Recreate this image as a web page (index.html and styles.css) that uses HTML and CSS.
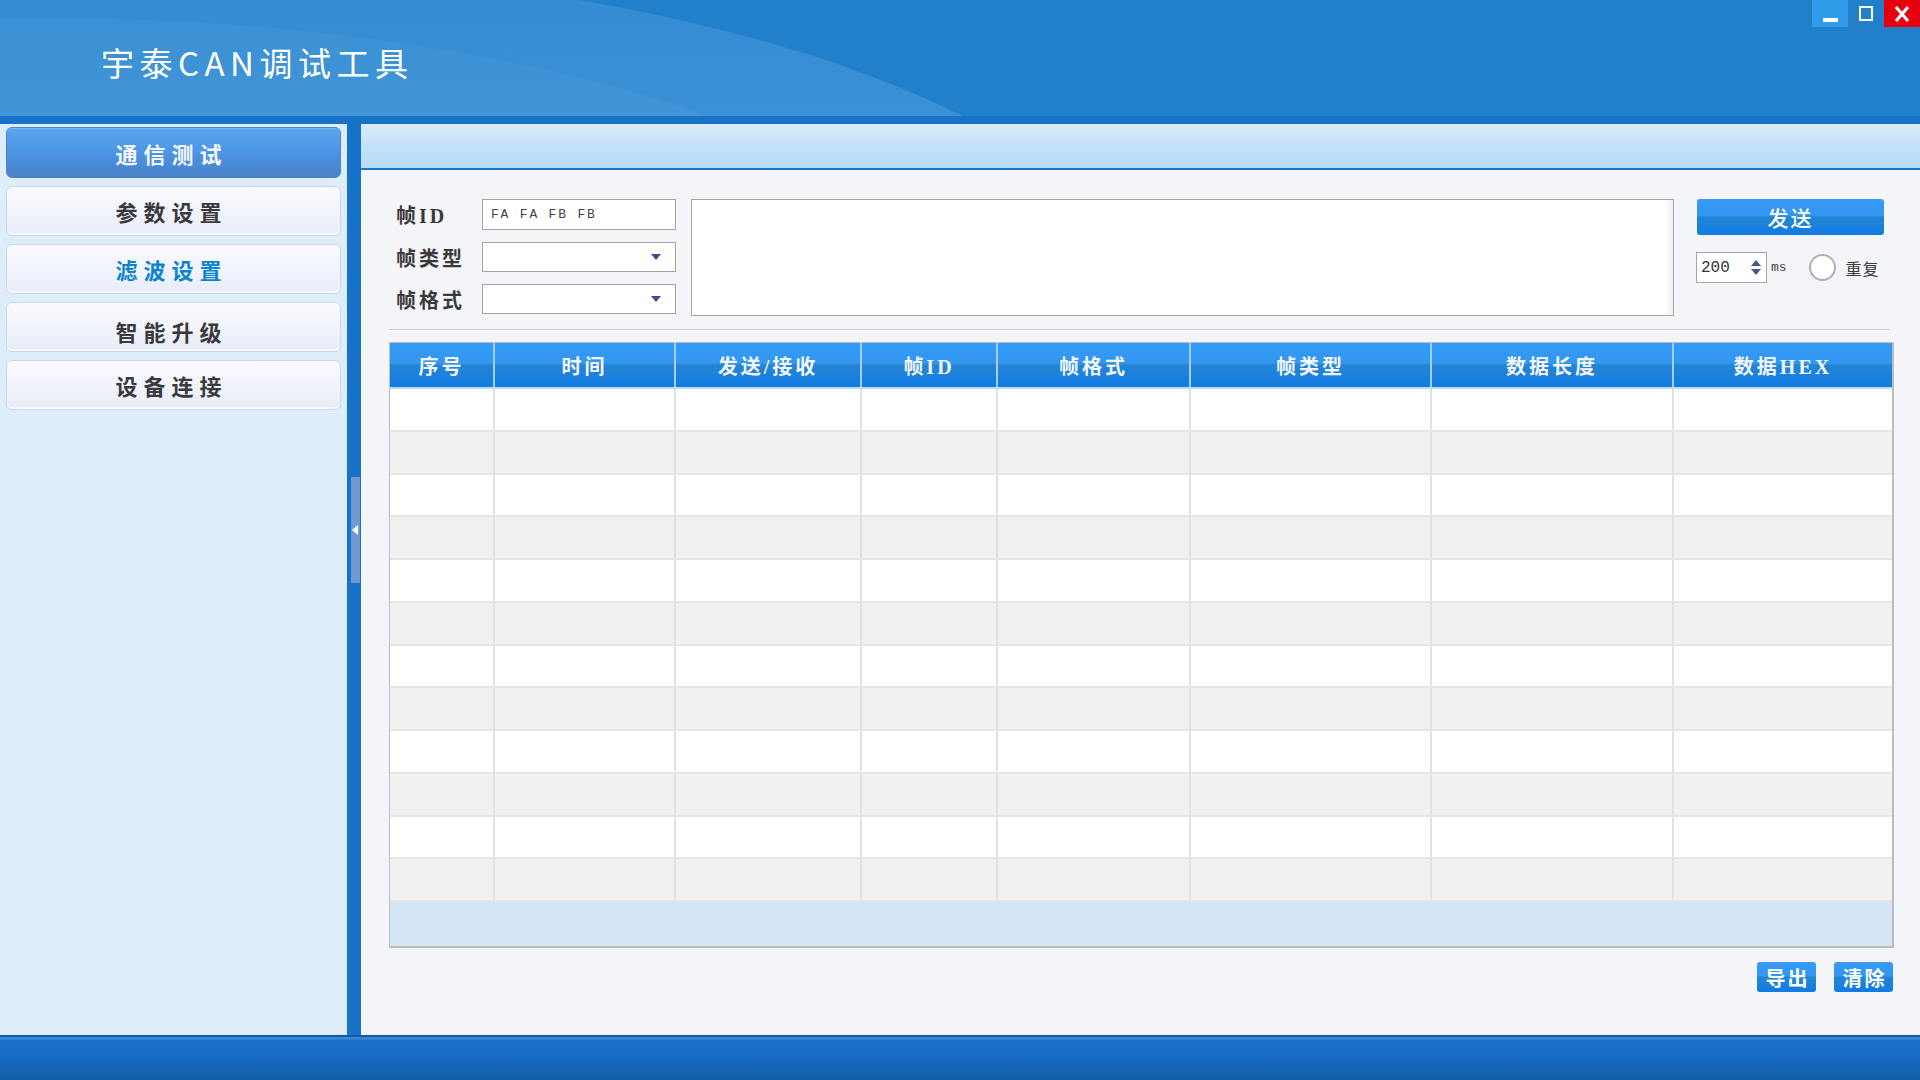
FILE: index.html
```html
<!DOCTYPE html>
<html lang="zh-CN">
<head>
<meta charset="utf-8">
<title>宇泰CAN调试工具</title>
<link rel="stylesheet" href="styles.css">
</head>
<body>
<div class="app">
  <header class="titlebar">
    <div class="swoosh"></div>
    <div class="swoosh2"></div>
    <h1 class="app-title">宇泰CAN调试工具</h1>
    <div class="win-ctrls">
      <div class="win-btn win-min"><span class="min-bar"></span></div>
      <div class="win-btn win-max"><span class="max-box"></span></div>
      <div class="win-btn win-close">
        <svg width="18" height="18" viewBox="0 0 18 18"><path d="M3 2 L15 16 M15 2 L3 16" stroke="#fff" stroke-width="3.2" fill="none"/></svg>
      </div>
    </div>
  </header>
  <div class="titlebar-bottom"></div>

  <div class="main">
    <nav class="sidebar">
      <div class="nav-btn active">通信测试</div>
      <div class="nav-btn">参数设置</div>
      <div class="nav-btn blue">滤波设置</div>
      <div class="nav-btn low">智能升级</div>
      <div class="nav-btn">设备连接</div>
    </nav>
    <div class="splitter">
      <div class="split-handle"><span class="tri-left"></span></div>
    </div>
    <section class="content">
      <div class="content-head"></div>
      <div class="form-area">
        <div class="form-fields">
          <div class="field-row">
            <label class="field-label">帧ID</label>
            <div class="text-input">FA FA FB FB</div>
          </div>
          <div class="field-row">
            <label class="field-label">帧类型</label>
            <div class="select-input"><span class="tri-down"></span></div>
          </div>
          <div class="field-row">
            <label class="field-label">帧格式</label>
            <div class="select-input"><span class="tri-down"></span></div>
          </div>
        </div>
        <div class="data-box"><div class="data-box-scroll"></div></div>
        <div class="send-panel">
          <div class="gloss-btn send-btn">发送</div>
          <div class="repeat-row">
            <div class="spin-box">
              <span class="spin-val">200</span>
              <span class="spin-arrows"><span class="tri-up-s"></span><span class="tri-down-s"></span></span>
            </div>
            <span class="ms">ms</span>
            <span class="radio"></span>
            <span class="repeat-label">重复</span>
          </div>
        </div>
      </div>
      <div class="separator"></div>

      <div class="grid-wrap">
        <table class="grid">
          <colgroup>
            <col class="c1"><col class="c2"><col class="c3"><col class="c4">
            <col class="c5"><col class="c6"><col class="c7"><col class="c8">
          </colgroup>
          <thead>
            <tr>
              <th>序号</th><th>时间</th><th>发送/接收</th><th>帧ID</th>
              <th>帧格式</th><th>帧类型</th><th>数据长度</th><th>数据HEX</th>
            </tr>
          </thead>
          <tbody>
            <tr><td></td><td></td><td></td><td></td><td></td><td></td><td></td><td></td></tr>
            <tr><td></td><td></td><td></td><td></td><td></td><td></td><td></td><td></td></tr>
            <tr><td></td><td></td><td></td><td></td><td></td><td></td><td></td><td></td></tr>
            <tr><td></td><td></td><td></td><td></td><td></td><td></td><td></td><td></td></tr>
            <tr><td></td><td></td><td></td><td></td><td></td><td></td><td></td><td></td></tr>
            <tr><td></td><td></td><td></td><td></td><td></td><td></td><td></td><td></td></tr>
            <tr><td></td><td></td><td></td><td></td><td></td><td></td><td></td><td></td></tr>
            <tr><td></td><td></td><td></td><td></td><td></td><td></td><td></td><td></td></tr>
            <tr><td></td><td></td><td></td><td></td><td></td><td></td><td></td><td></td></tr>
            <tr><td></td><td></td><td></td><td></td><td></td><td></td><td></td><td></td></tr>
            <tr><td></td><td></td><td></td><td></td><td></td><td></td><td></td><td></td></tr>
            <tr><td></td><td></td><td></td><td></td><td></td><td></td><td></td><td></td></tr>
          </tbody>
        </table>
      </div>

      <div class="actions">
        <div class="gloss-btn small-btn">导出</div>
        <div class="gloss-btn small-btn">清除</div>
      </div>
    </section>
  </div>

  <footer class="footer"></footer>
</div>
</body>
</html>
```

FILE: styles.css
```css
* { box-sizing: border-box; }
html, body { margin: 0; padding: 0; }
body {
  width: 1920px;
  height: 1080px;
  overflow: hidden;
  font-family: "Noto Sans CJK SC", "Liberation Sans", sans-serif;
  background: #f4f5f9;
}
.app { display: flex; flex-direction: column; height: 1080px; }

/* title bar */
.titlebar {
  position: relative;
  height: 116px;
  background: #2280cb;
  overflow: hidden;
  flex: none;
}
.swoosh {
  position: absolute;
  left: -853px;
  top: -35px;
  width: 2006px;
  height: 730px;
  border-radius: 50%;
  background: linear-gradient(180deg, rgba(90,165,225,0.28) 0%, rgba(110,180,235,0.38) 30%, rgba(110,180,235,0.25) 60%);
}
.swoosh2 {
  position: absolute;
  left: -900px;
  top: 18px;
  width: 1900px;
  height: 700px;
  border-radius: 50%;
  background: rgba(120,185,235,0.10);
}
.app-title {
  position: absolute;
  left: 101px;
  top: 37px;
  margin: 0;
  font-size: 33px;
  line-height: 50px;
  font-weight: 400;
  color: #fff;
  letter-spacing: 5.5px;
  font-family: "Noto Sans CJK SC", "Liberation Sans", sans-serif;
}
.win-ctrls {
  position: absolute;
  right: 0;
  top: 0;
  display: flex;
}
.win-btn {
  width: 36px;
  height: 27px;
  display: flex;
  align-items: center;
  justify-content: center;
}
.win-min { background: #2f9be9; align-items: flex-end; padding-bottom: 5px; }
.min-bar { width: 15px; height: 4px; background: #fff; display: block; }
.max-box { width: 14px; height: 15px; border: 2.5px solid #fff; display: block; }
.win-close { background: #e6000f; }
.titlebar-bottom { height: 8px; background: #1872c9; flex: none; }

/* main */
.main { display: flex; height: 911px; flex: none; }
.sidebar {
  width: 347px;
  background: #deedfa;
  padding: 3px 6px 0 6px;
  display: flex;
  flex-direction: column;
  gap: 8px;
  flex: none;
}
.nav-btn {
  height: 50px;
  border: 1px solid #c8d6ef;
  border-radius: 6px;
  background: linear-gradient(180deg, #fbfbff 0%, #f2f4fc 50%, #e6ecf8 100%);
  box-shadow: inset 0 -2px 0 #f8faff;
  display: flex;
  align-items: center;
  justify-content: center;
  font-size: 22px;
  font-weight: 700;
  letter-spacing: 6px;
  padding-right: 4px;
  color: #3a3a3c;
}
.nav-btn.low { padding-top: 8px; }
.nav-btn.active {
  height: 51px;
  color: #f4f8ff;
  border-color: #4a86cf;
  background: linear-gradient(180deg, #5aa4f0 0%, #4d97e6 45%, #4a88d4 80%, #4a82c6 100%);
  box-shadow: inset 0 1px 0 #7dbaf5;
}
.nav-btn.blue { color: #0a84cf; }

.splitter {
  width: 14px;
  background: #1673c9;
  flex: none;
  padding-top: 353px;
  display: flex;
  justify-content: center;
}
.split-handle {
  width: 9px;
  height: 106px;
  margin-left: 3px;
  background: #6f9bd0;
  display: flex;
  align-items: center;
}
.tri-left {
  width: 0; height: 0;
  border-top: 5px solid transparent;
  border-bottom: 5px solid transparent;
  border-right: 6px solid #fff;
  margin-left: 1px;
}

/* content */
.content {
  flex: 1;
  background: #f4f5f9;
  display: flex;
  flex-direction: column;
}
.content-head {
  height: 46px;
  background: linear-gradient(180deg, #d8ecfb 0%, #c5e2f8 50%, #b6daf5 100%);
  border-bottom: 2px solid #1a78cc;
  flex: none;
}
.form-area {
  display: flex;
  padding: 29px 0 0 35px;
  height: 159px;
  flex: none;
}
.form-fields {
  display: flex;
  flex-direction: column;
  gap: 12px;
  width: 280px;
}
.field-row { display: flex; align-items: center; height: 31px; }
.field-row + .field-row { height: 30px; }
.field-label {
  width: 86px;
  font-family: "Liberation Serif", "Noto Sans CJK SC", serif;
  font-size: 20px;
  font-weight: 700;
  color: #3a3a3a;
  letter-spacing: 3px;
}
.text-input {
  width: 194px;
  height: 31px;
  border: 1px solid #a3a3a3;
  background: #fff;
  font-family: "Liberation Mono", monospace;
  font-size: 13px;
  letter-spacing: 1.8px;
  color: #444;
  padding-left: 8px;
  display: flex;
  align-items: center;
}
.select-input {
  width: 194px;
  height: 30px;
  border: 1px solid #a3a3a3;
  background: #fff;
  display: flex;
  align-items: center;
  justify-content: flex-end;
  padding-right: 14px;
}
.tri-down {
  width: 0; height: 0;
  border-left: 5px solid transparent;
  border-right: 5px solid transparent;
  border-top: 6px solid #3d4a8e;
}
.data-box {
  width: 983px;
  height: 117px;
  margin-left: 15px;
  border: 1px solid #a5a5a5;
  background: #fff;
  position: relative;
}
.data-box-scroll {
  position: absolute;
  right: 0; top: 0; bottom: 0;
  width: 8px;
  background: linear-gradient(90deg, #fff, #f1f1f1);
}
.send-panel {
  margin-left: 23px;
  display: flex;
  flex-direction: column;
}
.gloss-btn {
  color: #fff;
  font-weight: 700;
  display: flex;
  align-items: center;
  justify-content: center;
  border-radius: 3px;
  background: linear-gradient(180deg, #369af6 0%, #3297f1 46%, #2386d4 50%, #1a80dc 75%, #0f7be4 100%);
}
.send-btn {
  width: 187px;
  height: 36px;
  font-size: 21px;
  font-weight: 500;
  letter-spacing: 2px;
}
.repeat-row {
  display: flex;
  align-items: center;
  margin-top: 17px;
  margin-left: -1px;
}
.spin-box {
  width: 71px;
  height: 31px;
  border: 1px solid #a5a5a5;
  background: #fff;
  display: flex;
  align-items: center;
  justify-content: space-between;
  padding: 0 5px 0 4px;
}
.spin-val {
  font-family: "Liberation Mono", monospace;
  font-size: 16px;
  color: #333;
}
.spin-arrows { display: flex; flex-direction: column; gap: 3px; }
.tri-up-s {
  width: 0; height: 0;
  border-left: 5px solid transparent;
  border-right: 5px solid transparent;
  border-bottom: 6px solid #4a5592;
}
.tri-down-s {
  width: 0; height: 0;
  border-left: 5px solid transparent;
  border-right: 5px solid transparent;
  border-top: 6px solid #4a5592;
}
.ms {
  font-family: "Liberation Mono", monospace;
  font-size: 13px;
  color: #444;
  margin-left: 4px;
}
.radio {
  width: 27px;
  height: 27px;
  border-radius: 50%;
  border: 2px solid #b0b0b0;
  background: radial-gradient(circle at 50% 40%, #fff 55%, #ececec 100%);
  margin-left: 22px;
}
.repeat-label {
  font-size: 16px;
  color: #3a3a3a;
  margin-left: 10px;
  letter-spacing: 1px;
}

.separator {
  height: 2px;
  margin: 0 30px 0 28px;
  background: #cfcfd3;
  border-bottom: 1px solid #f4f5f9;
  flex: none;
}

.grid-wrap {
  margin: 11px 26px 0 28px;
  height: 606px;
  border: 1px solid #bdbdbd;
  border-right-width: 2px;
  border-bottom-width: 2px;
  background: #d4e5f6;
  flex: none;
  overflow: hidden;
}
.grid {
  width: 100%;
  border-collapse: collapse;
  table-layout: fixed;
}
.c1 { width: 104px; }
.c2 { width: 181px; }
.c3 { width: 186px; }
.c4 { width: 136px; }
.c5 { width: 193px; }
.c6 { width: 241px; }
.c7 { width: 242px; }
.c8 { width: auto; }
.grid th {
  height: 45px;
  padding: 0;
  color: #f2f6ff;
  font-family: "Liberation Serif", "Noto Sans CJK SC", serif;
  font-size: 20px;
  font-weight: 700;
  letter-spacing: 3px;
  text-align: center;
  background: linear-gradient(180deg, #359af6 0%, #3297f1 46%, #2585d2 50%, #1a80dc 75%, #0f7be4 100%);
  border-right: 2px solid #a6cdf0;
  border-bottom: 2px solid #c0d8ee;
}
.grid th:last-child { border-right: none; }
.grid td {
  height: 42.75px;
  padding: 0;
  border-right: 2px solid #e2e2e2;
  border-bottom: 2px solid #e6e6e6;
  background: #fff;
}
.grid td:last-child { border-right: none; }
.grid tbody tr:nth-child(even) td { background: #f1f1f1; }

.actions {
  display: flex;
  justify-content: flex-end;
  gap: 18px;
  margin: 14px 27px 0 0;
}
.small-btn {
  width: 59px;
  height: 30px;
  font-size: 20px;
  letter-spacing: 2px;
  padding-left: 2px;
}

.footer {
  flex: none;
  height: 45px;
  border-top: 2px solid #1a56a6;
  background: linear-gradient(180deg, #3189d8 0px, #3189d8 2px, #1a72cc 3px, #176ac0 50%, #135ea8 100%);
}
```
